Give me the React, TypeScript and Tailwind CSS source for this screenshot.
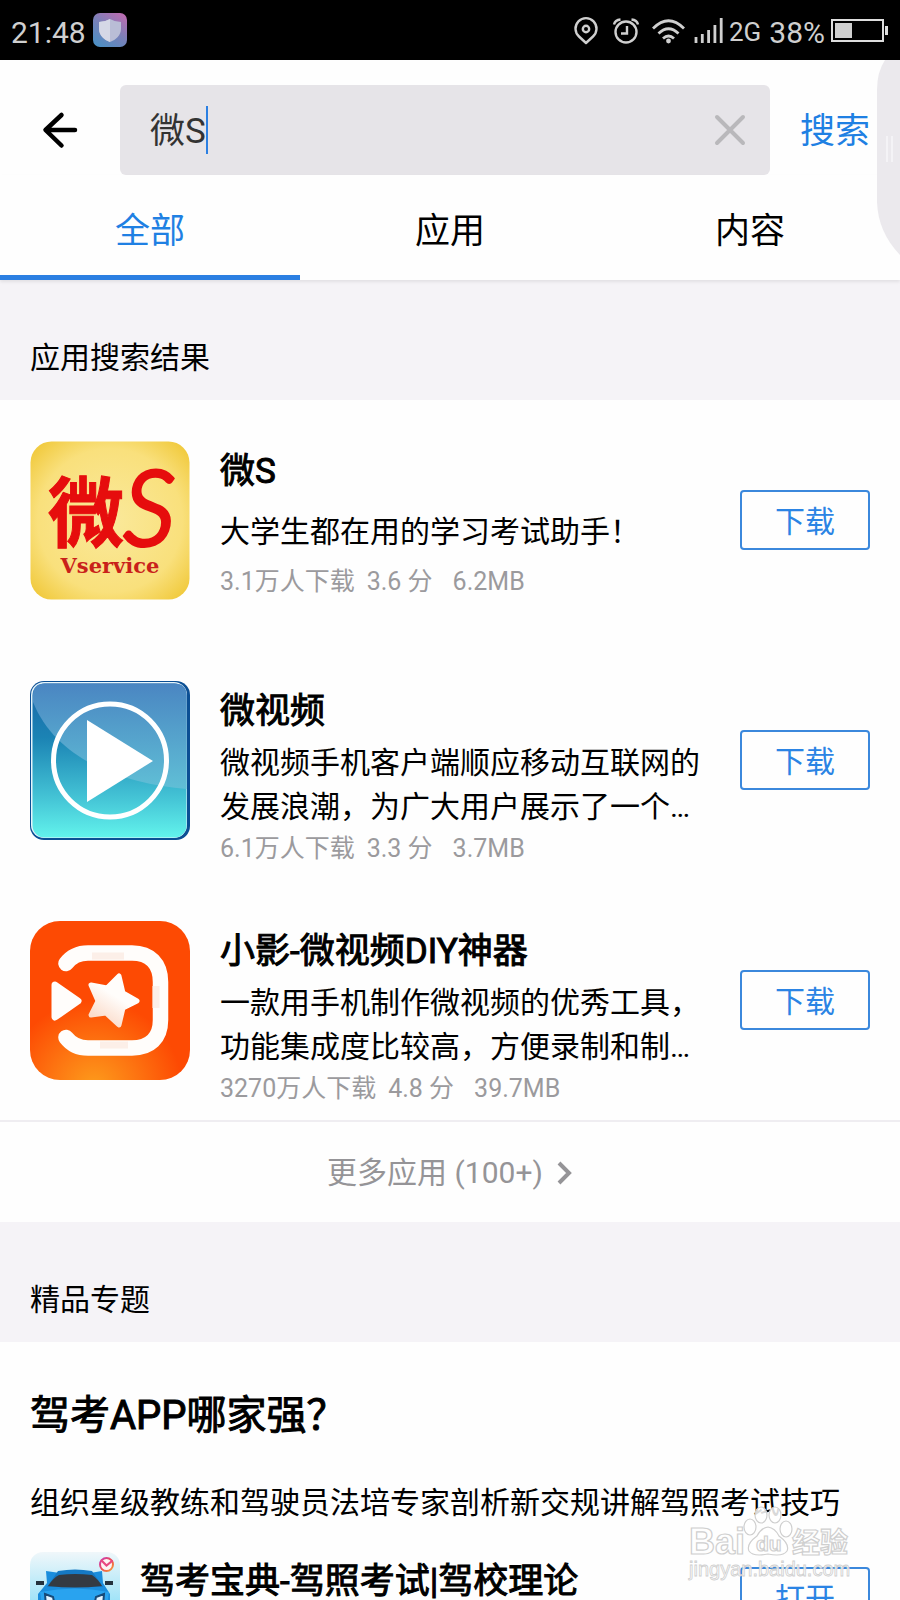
import { useState } from "react";
import type { ReactNode } from "react";
import { clsx } from "clsx";

type AppItem = {
  name: string;
  description: string;
  downloads: string;
  score: string;
  size: string;
  compact?: boolean;
  icon: ReactNode;
};

const TABS = ["全部", "应用", "内容"];

function StatusBar() {
  return (
    <div className="flex h-[60px] items-center justify-between bg-black pr-[11px] pl-[11px] text-[#cfcfcf]">
      <div className="flex items-center gap-1.5">
        <span className="pt-1.5 text-[30px] leading-10">21:48</span>
        <svg className="h-9 w-9" viewBox="0 0 36 36" aria-hidden>
          <defs>
            <linearGradient id="guard" x1="0.9" y1="0" x2="0.2" y2="1">
              <stop offset="0" stopColor="#c06bb0" />
              <stop offset="0.5" stopColor="#7a80b8" />
              <stop offset="1" stopColor="#4d8fc4" />
            </linearGradient>
          </defs>
          <rect x="1" y="1" width="34" height="34" rx="7" fill="url(#guard)" />
          <path d="M18 7 Q23 10 29 10 V17 C29 23 24 28 18 30 C12 28 7 23 7 17 V10 Q13 10 18 7 Z" fill="#b9bdd6" />
          <path d="M18 7 Q13 10 7 10 V17 C7 23 12 28 18 30 Z" fill="#d5d8e6" />
        </svg>
      </div>
      <div className="flex items-center">
        <svg className="mt-0.5 h-8 w-[157px]" viewBox="0 0 157 32" fill="none" stroke="#cfcfcf" strokeWidth="2.4" aria-hidden>
          <path d="M14 28 L7 21.500 A10.500 10.500 0 1 1 21 21.500 Z" strokeLinejoin="round" />
          <circle cx="14" cy="14" r="3.200" />
          <circle cx="54" cy="17" r="10.500" />
          <path d="M55 11 V18.500 H49" />
          <path d="M42 9.500 Q43 5 48.500 4.500 M66 9.500 Q65 5 59.500 4.500" />
          <path d="M81 13.500 Q96.500 -2 112 13.500" strokeWidth="2.800" />
          <path d="M86.500 18.500 Q96.500 9 106.500 18.500" strokeWidth="2.800" />
          <path d="M91 23.500 Q96.500 18.500 102 23.500" strokeWidth="2.800" />
          <circle cx="96.500" cy="26" r="2.400" fill="#cfcfcf" stroke="none" />
          <path
            d="M124 28 V22 M130.300 28 V19 M136.600 28 V15 M142.900 28 V10 M149.200 28 V3"
            strokeWidth="2.800"
          />
        </svg>
        <span className="pt-1 text-[26px] leading-10">2G</span>
        <span className="ml-2 pt-1.5 text-[30px] leading-10">38%</span>
        <svg className="mt-0.5 ml-1.5 h-6 w-[58px]" viewBox="0 0 58 24" aria-hidden>
          <rect x="1" y="1" width="51" height="21" fill="none" stroke="#dedede" strokeWidth="2" />
          <rect x="4" y="4" width="17" height="15" fill="#cfcfcf" />
          <rect x="54" y="7" width="3" height="9" fill="#dedede" />
        </svg>
      </div>
    </div>
  );
}

function SearchHeader() {
  const [query, setQuery] = useState("微S");

  return (
    <form className="flex items-center pt-[25px]" onSubmit={(e) => e.preventDefault()}>
      <button type="button" aria-label="返回" className="flex h-[90px] w-[120px] items-center justify-center">
        <svg
          className="h-10 w-10"
          viewBox="0 0 40 40"
          fill="none"
          stroke="#000"
          strokeWidth="4.500"
          strokeLinecap="round"
          strokeLinejoin="round"
          aria-hidden
        >
          <path d="M21.500 5 L5.500 20 L21.500 35.500 M6 20 H35" />
        </svg>
      </button>
      <div className="flex h-[90px] flex-1 items-center rounded-md bg-[#e6e4e8] pr-5 pl-[30px]">
        <input
          type="text"
          aria-label="搜索关键词"
          value={query}
          onChange={(e) => setQuery(e.target.value)}
          className="field-sizing-content h-12 pt-1 text-[35px] text-[#333] caret-transparent outline-none"
        />
        <span className="h-12 w-0.5 bg-[#2b7fe2]" />
        <button
          type="button"
          aria-label="清除"
          onClick={() => setQuery("")}
          className="ml-auto flex h-10 w-10 items-center justify-center"
        >
          <svg className="h-8 w-8" viewBox="0 0 32 32" stroke="#b9b8bb" strokeWidth="4" strokeLinecap="round" aria-hidden>
            <path d="M3 3 L29 29 M29 3 L3 29" />
          </svg>
        </button>
      </div>
      <button type="submit" className="w-[130px] pt-1 text-[35px] leading-12 text-[#1f80e3]">
        搜索
      </button>
    </form>
  );
}

function TabBar() {
  const [active, setActive] = useState(TABS[0]);

  return (
    <div role="tablist" className="relative grid h-[105px] grid-cols-3 bg-[#fefefe] shadow-[0_2px_3px_rgba(0,0,0,0.08)]">
      {TABS.map((tab) => (
        <button
          key={tab}
          type="button"
          role="tab"
          aria-selected={tab === active}
          onClick={() => setActive(tab)}
          className={clsx(
            "border-b-[5px] pt-3.5 text-[35px] leading-12",
            tab === active ? "border-[#2b7fe2] text-[#1f80e3]" : "border-transparent text-black",
          )}
        >
          {tab}
        </button>
      ))}
    </div>
  );
}

function SectionTitle({ children }: { children: ReactNode }) {
  return (
    <h2 className="flex h-[120px] items-end bg-[#f5f3f7] px-[30px] pb-[22px] text-[30px] leading-10 text-black">
      {children}
    </h2>
  );
}

function ActionButton({ children }: { children: ReactNode }) {
  return (
    <button
      type="button"
      className="h-[60px] w-[130px] shrink-0 rounded-sm border-2 border-[#3b88dc] pt-1 text-[30px] leading-10 text-[#2b84e4]"
    >
      {children}
    </button>
  );
}

function WeiSIcon() {
  return (
    <svg className="h-[160px] w-[160px] shrink-0" viewBox="0 0 160 160" aria-hidden>
      <defs>
        <radialGradient id="gold" cx="0.5" cy="0.5" r="0.700">
          <stop offset="0" stopColor="#fae99b" />
          <stop offset="0.650" stopColor="#f9e07c" />
          <stop offset="1" stopColor="#efc530" />
        </radialGradient>
      </defs>
      <rect x="0.500" y="1.500" width="159" height="158" rx="21" fill="url(#gold)" />
      <g fill="#e60d0d" stroke="#e60d0d">
        <text x="18" y="101" fontSize="76" fontWeight="700" fontFamily="'Noto Sans CJK SC', sans-serif">
          微
        </text>
        <text x="94" y="105" fontSize="102" fontStyle="italic" fontWeight="300" fontFamily="Lato, sans-serif" strokeWidth="5">
          S
        </text>
      </g>
      <text x="80" y="133" fontSize="21" fontWeight="700" textAnchor="middle" fill="#c9211a" fontFamily="'DejaVu Serif', serif">
        Vservice
      </text>
    </svg>
  );
}

function PlayIcon() {
  return (
    <svg className="h-[160px] w-[160px] shrink-0" viewBox="0 0 160 160" aria-hidden>
      <defs>
        <linearGradient id="sea" x1="0" y1="0" x2="0" y2="1">
          <stop offset="0" stopColor="#1a66a8" />
          <stop offset="0.350" stopColor="#1b83b4" />
          <stop offset="0.750" stopColor="#45c5d6" />
          <stop offset="1" stopColor="#62f3ec" />
        </linearGradient>
        <linearGradient id="gloss" x1="0" y1="0" x2="0" y2="1">
          <stop offset="0" stopColor="#4a86c2" />
          <stop offset="1" stopColor="#60bfd6" />
        </linearGradient>
      </defs>
      <rect x="0" y="1" width="160" height="159" rx="14" fill="#0b4f94" />
      <rect x="1" y="2" width="156" height="156" rx="13" fill="#e6f5fb" />
      <rect x="2.500" y="3.500" width="154" height="154" rx="12" fill="url(#sea)" />
      <path d="M3 22 V15 Q3 3.500 15 3.500 H144 Q156.500 3.500 156.500 15 V109 C100 104 28 84 3 22 Z" fill="url(#gloss)" />
      <circle cx="80" cy="80.500" r="56.500" fill="none" stroke="#fff" strokeWidth="5" />
      <path d="M57 40 L123 81 L57 122 Z" fill="#fff" />
    </svg>
  );
}

function VivaIcon() {
  return (
    <svg className="h-[160px] w-[160px] shrink-0" viewBox="0 0 160 160" aria-hidden>
      <defs>
        <radialGradient id="flame" cx="0.400" cy="1.050" r="0.550">
          <stop offset="0" stopColor="#fd9d1c" />
          <stop offset="0.500" stopColor="#fd7411" />
          <stop offset="1" stopColor="#fd4a03" />
        </radialGradient>
        <linearGradient id="star" gradientUnits="userSpaceOnUse" x1="95" y1="60" x2="70" y2="100">
          <stop offset="0.400" stopColor="#fffdfb" />
          <stop offset="1" stopColor="#fbdccb" />
        </linearGradient>
      </defs>
      <rect x="0" y="1" width="160" height="159" rx="30" fill="url(#flame)" />
      <path
        d="M36 43.500 Q44 33 58 33 H102 C120 33 130.500 44 130.500 62 V100 C130.500 118 120 128 102 128 H58 Q44 128 36 117.500"
        fill="none"
        stroke="#fffdfb"
        strokeWidth="15.500"
        strokeLinecap="round"
      />
      <path d="M62 36 H94 M126 66 V88 M70 125 H98" fill="none" stroke="#fcefe8" strokeWidth="7" />
      <path d="M25 65 L48 81 L25 97 Z" fill="#fffdfb" stroke="#fffdfb" strokeWidth="7" strokeLinejoin="round" />
      <path
        d="M89 56 L93 73 L107 81 L93 88 L89 105 L76 93 L61 95 L68 81 L61 65 L77 68 Z"
        fill="url(#star)"
        stroke="url(#star)"
        strokeWidth="5"
        strokeLinejoin="round"
      />
    </svg>
  );
}

function CarIcon() {
  return (
    <svg className="h-[90px] w-[90px] shrink-0" viewBox="0 0 90 90" aria-hidden>
      <defs>
        <linearGradient id="sky" x1="0" y1="0" x2="0" y2="1">
          <stop offset="0" stopColor="#f0f7fa" />
          <stop offset="0.550" stopColor="#9fe3f8" />
          <stop offset="1" stopColor="#4fc3ef" />
        </linearGradient>
        <linearGradient id="logo" x1="0" y1="0" x2="1" y2="1">
          <stop offset="0" stopColor="#c63fc0" />
          <stop offset="0.500" stopColor="#ee4b50" />
          <stop offset="1" stopColor="#f5a13a" />
        </linearGradient>
      </defs>
      <rect x="0" y="0" width="90" height="90" rx="13" fill="url(#sky)" />
      <path d="M16 19 L30 21 H60 L72 19 L73 31 L80 42 V70 H8 V42 L17 31 Z" fill="#1a8ddd" />
      <path d="M28 19 Q45 16 62 19 L73 35 H17 Z" fill="#1579c4" />
      <path d="M29 23 Q45 21 62 23 Q68 27 72 34 Q45 37 18 34 Q23 26 29 23 Z" fill="#343a42" />
      <path d="M10 40 Q45 33 79 40 L76 60 H13 Z" fill="#29a3ef" />
      <path d="M6 29 H14 V33 H6 Z M75 29 H83 V33 H75 Z" fill="#24323e" />
      <path d="M15 42 L23 45 L25 54 H16 Z M74 42 L66 45 L64 54 H73 Z" fill="#e5f4ff" stroke="#174a78" strokeWidth="2" />
      <circle cx="76.500" cy="12.500" r="6.500" fill="#fdf5f3" stroke="url(#logo)" strokeWidth="2" />
      <path d="M71.500 8.500 L76.500 13.500 L82 9" fill="none" stroke="#e84a80" strokeWidth="2.200" strokeLinecap="round" />
    </svg>
  );
}

const APPS: AppItem[] = [
  {
    name: "微S",
    description: "大学生都在用的学习考试助手！",
    downloads: "3.1万人下载",
    score: "3.6 分",
    size: "6.2MB",
    compact: true,
    icon: <WeiSIcon />,
  },
  {
    name: "微视频",
    description: "微视频手机客户端顺应移动互联网的发展浪潮，为广大用户展示了一个…",
    downloads: "6.1万人下载",
    score: "3.3 分",
    size: "3.7MB",
    icon: <PlayIcon />,
  },
  {
    name: "小影-微视频DIY神器",
    description: "一款用手机制作微视频的优秀工具，功能集成度比较高，方便录制和制…",
    downloads: "3270万人下载",
    score: "4.8 分",
    size: "39.7MB",
    icon: <VivaIcon />,
  },
];

function AppRow({ app }: { app: AppItem }) {
  return (
    <li className="flex min-h-[240px] items-center px-[30px]">
      {app.icon}
      <div className="mr-5 ml-[30px] min-w-0 flex-1 self-start pt-[50px]">
        <h3 className="text-[35px] leading-11 [-webkit-text-stroke:1px]">{app.name}</h3>
        <p className={clsx("text-[30px] leading-11", app.compact ? "mt-4 mb-2" : "mt-[7px]")}>{app.description}</p>
        <p className="flex text-[25px] leading-10 text-[#9b9a9d]">
          <span>{app.downloads}</span>
          <span className="ml-3">{app.score}</span>
          <span className="ml-5">{app.size}</span>
        </p>
      </div>
      <ActionButton>下载</ActionButton>
    </li>
  );
}

function Watermark() {
  return (
    <svg className="pointer-events-none absolute right-[45px] bottom-[12px] h-[84px] w-[170px]" viewBox="0 0 170 84" aria-hidden>
      <g fill="#fff" fillOpacity="0.850" stroke="#cfcfcf" strokeWidth="1.200" fontWeight="700">
        <text x="4" y="50" fontSize="36" fontFamily="'Liberation Sans', sans-serif">Bai</text>
        <ellipse cx="65" cy="23" rx="6" ry="8" />
        <ellipse cx="76" cy="11" rx="6" ry="8" />
        <ellipse cx="90" cy="11" rx="6" ry="8" />
        <ellipse cx="101" cy="25" rx="6" ry="8" />
        <path d="M83 23 Q90 24 94 32 Q105 40 102 47 Q98 53 83 50 Q68 53 64 47 Q61 40 72 32 Q76 24 83 23 Z" />
        <text x="71" y="47" fontSize="21" fontFamily="'Liberation Sans', sans-serif">du</text>
        <text x="107" y="49" fontSize="28" fontFamily="'Noto Sans CJK SC', sans-serif">经验</text>
        <text x="4" y="72" fontSize="20" strokeWidth="0.800" fontWeight="400" fontFamily="'Liberation Sans', sans-serif">
          jingyan.baidu.com
        </text>
      </g>
    </svg>
  );
}

export default function App() {
  return (
    <div className="relative h-screen overflow-hidden bg-[#fefefe] font-['Roboto','Noto_Sans_CJK_SC',sans-serif] text-black">
      <StatusBar />
      <header>
        <SearchHeader />
        <TabBar />
      </header>

      <main>
        <section>
          <SectionTitle>应用搜索结果</SectionTitle>
          <ul>
            {APPS.map((app) => (
              <AppRow key={app.name} app={app} />
            ))}
          </ul>
          <a
            href="#more"
            className="flex h-[102px] items-center justify-center gap-3.5 border-t-2 border-[#efedf1] pt-0.5 text-[30px] leading-10 text-[#959497]"
          >
            更多应用 (100+)
            <svg className="h-6 w-4" viewBox="0 0 16 24" fill="none" stroke="#959497" strokeWidth="4" aria-hidden>
              <path d="M2 2 L12 12 L2 22" />
            </svg>
          </a>
        </section>

        <section>
          <SectionTitle>精品专题</SectionTitle>
          <div className="px-[30px] pt-[46px]">
            <h3 className="text-[40px] leading-14 [-webkit-text-stroke:1px]">驾考APP哪家强？</h3>
            <p className="mt-[37px] text-[30px] leading-11">组织星级教练和驾驶员法培专家剖析新交规讲解驾照考试技巧</p>
            <div className="mt-[27px] flex items-center">
              <CarIcon />
              <h4 className="ml-5 flex-1 self-start pt-2 text-[35px] leading-11 [-webkit-text-stroke:1px]">
                驾考宝典-驾照考试|驾校理论
              </h4>
              <ActionButton>打开</ActionButton>
            </div>
          </div>
        </section>
      </main>

      {/* edge panel handle */}
      <svg className="absolute top-[60px] right-0 h-[196px] w-6" viewBox="0 0 24 196" aria-hidden>
        <path d="M9 0 Q1 12 1 30 V142 Q2 172 24 195 V0 Z" fill="#ebe9ed" />
        <path d="M11 76 V102 M16 76 V102" stroke="#f4f3f6" strokeWidth="2" />
      </svg>
      <Watermark />
    </div>
  );
}
